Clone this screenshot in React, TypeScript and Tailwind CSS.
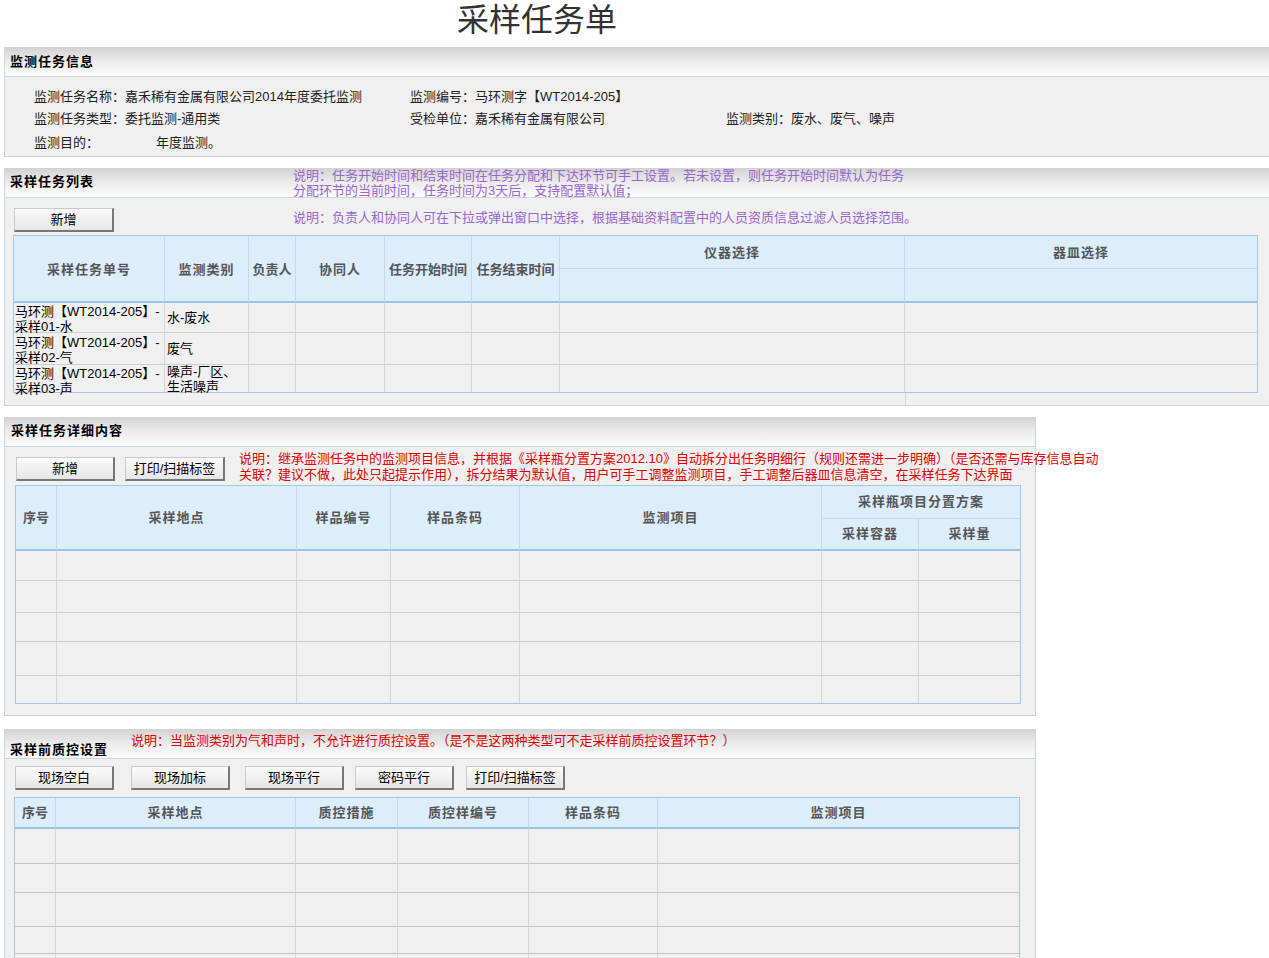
import React from "react";

const TH =
  "bg-[#dcedfc] border-r border-[#c4d9eb] p-0 text-center align-middle text-[13px] font-bold tracking-[1px] text-[#555]";
const TH_LAST =
  "bg-[#dcedfc] p-0 text-center align-middle text-[13px] font-bold tracking-[1px] text-[#555]";
const TH_BOTTOM = "border-b-2 border-b-[#9cc3e3]";
const TD = "border-r border-b border-r-[#d6d6d6] border-b-[#cdcdcd] p-0 align-top";

function Btn({ children, className = "" }: { children: React.ReactNode; className?: string }) {
  return (
    <button
      className={`flex h-[24px] w-[99px] shrink-0 items-center justify-center border-t border-l border-t-[#c9c9c9] border-l-[#c9c9c9] border-r-2 border-b-2 border-r-[#777] border-b-[#777] bg-linear-to-b from-[#fbfbfb] to-[#e6e6e6] text-[13px] leading-[16px] text-black ${className}`}
    >
      {children}
    </button>
  );
}

function PanelHead({
  title,
  titleClass = "",
  children,
}: {
  title: string;
  titleClass?: string;
  children?: React.ReactNode;
}) {
  return (
    <div className="flex h-[30px] items-start border-b border-[#cbd7e2] bg-linear-to-b from-[#d2d2d2] via-[#ececec] to-[#fcfcfc]">
      <div className={`shrink-0 text-[13px] font-bold leading-[16px] tracking-[1px] text-black ${titleClass}`}>
        {title}
      </div>
      {children}
    </div>
  );
}

// empty body rows: one entry per row height
function EmptyRows({ heights, cols, rowClass }: { heights: string[]; cols: number; rowClass?: string }) {
  return (
    <>
      {heights.map((h, r) => (
        <tr key={r} className={h}>
          {Array.from({ length: cols }).map((_, c) => {
            const lastCol = c === cols - 1;
            const lastRow = r === heights.length - 1;
            return (
              <td
                key={c}
                className={`p-0 ${lastCol ? "" : "border-r border-r-[#d6d6d6]"} ${
                  lastRow ? "" : `border-b ${rowClass ?? "border-b-[#cdcdcd]"}`
                }`}
              />
            );
          })}
        </tr>
      ))}
    </>
  );
}

// inner heights are fixed so two-line cells spill over like the original page
const taskRows: { no: React.ReactNode; type: React.ReactNode; h: string; pad: string; last?: boolean }[] = [
  {
    no: (
      <>
        马环测【WT2014-205】-
        <br />
        采样01-水
      </>
    ),
    type: "水-废水",
    h: "h-[29px]",
    pad: "pt-[1px]",
  },
  {
    no: (
      <>
        马环测【WT2014-205】-
        <br />
        采样02-气
      </>
    ),
    type: "废气",
    h: "h-[31px]",
    pad: "pt-[2px]",
  },
  {
    no: (
      <>
        马环测【WT2014-205】-
        <br />
        采样03-声
      </>
    ),
    type: (
      <>
        噪声-厂区、
        <br />
        生活噪声
      </>
    ),
    h: "h-[27px]",
    pad: "pt-[1px]",
    last: true,
  },
];

export default function App() {
  return (
    <div className="h-[958px] w-[1269px] overflow-hidden bg-white font-['Liberation_Sans','Noto_Sans_CJK_SC',sans-serif] text-[13px] leading-[16px] text-[#222]">
      <div className="h-[47px] w-[1074px] pt-[2px] text-center text-[32px] leading-[36px] text-[#333]">采样任务单</div>

      {/* 监测任务信息 */}
      <section className="ml-[4px] w-[1265px] border-l border-[#c5d8ea]">
        <PanelHead title="监测任务信息" titleClass="pl-[5px] pt-[7px]" />
        <div className="border-b border-[#d0d0d0] bg-[#f0f0f0] pt-[9px] pb-[3px] pl-[29px]">
          <div className="grid grid-cols-[376px_316px_1fr] grid-rows-[22px_22px_23px] items-center">
            <div>监测任务名称：嘉禾稀有金属有限公司2014年度委托监测</div>
            <div>监测编号：马环测字【WT2014-205】</div>
            <div />
            <div>监测任务类型：委托监测-通用类</div>
            <div>受检单位：嘉禾稀有金属有限公司</div>
            <div>监测类别：废水、废气、噪声</div>
            <div className="pt-[2px]">
              <span className="inline-block w-[122px]">监测目的：</span>年度监测。
            </div>
          </div>
        </div>
      </section>

      {/* 采样任务列表 */}
      <section className="mt-[11px] ml-[4px] w-[1265px] border-l border-[#c5d8ea]">
        <PanelHead title="采样任务列表" titleClass="w-[288px] pl-[5px] pt-[6px]">
          <p className="whitespace-nowrap leading-[15px] text-[#9966cc]">
            说明：任务开始时间和结束时间在任务分配和下达环节可手工设置。若未设置，则任务开始时间默认为任务
            <br />
            分配环节的当前时间，任务时间为3天后，支持配置默认值；
          </p>
        </PanelHead>
        <div className="border-b border-[#d0d0d0] bg-[#f0f0f0] pt-[10px] pl-[9px]">
          <div className="flex items-start">
            <Btn className="w-[100px]">新增</Btn>
            <p className="mt-[2px] ml-[179px] whitespace-nowrap leading-[15px] text-[#9966cc]">
              说明：负责人和协同人可在下拉或弹出窗口中选择，根据基础资料配置中的人员资质信息过滤人员选择范围。
            </p>
          </div>
          <div className="mt-[3px] -ml-[1px] w-[1245px] border border-[#a3c7e6]">
            <table className="w-full table-fixed border-separate border-spacing-0">
              <colgroup>
                <col className="w-[151px]" />
                <col className="w-[84px]" />
                <col className="w-[47px]" />
                <col className="w-[89px]" />
                <col className="w-[87px]" />
                <col className="w-[88px]" />
                <col className="w-[345px]" />
                <col />
              </colgroup>
              <thead>
                <tr className="h-[33px]">
                  <th rowSpan={2} className={`${TH} ${TH_BOTTOM} pt-[3px]`}>采样任务单号</th>
                  <th rowSpan={2} className={`${TH} ${TH_BOTTOM} pt-[3px]`}>监测类别</th>
                  <th rowSpan={2} className={`${TH} ${TH_BOTTOM} pt-[3px] tracking-normal`}>负责人</th>
                  <th rowSpan={2} className={`${TH} ${TH_BOTTOM} pt-[3px]`}>协同人</th>
                  <th rowSpan={2} className={`${TH} ${TH_BOTTOM} pt-[3px] tracking-normal whitespace-nowrap`}>任务开始时间</th>
                  <th rowSpan={2} className={`${TH} ${TH_BOTTOM} pt-[3px] tracking-normal whitespace-nowrap`}>任务结束时间</th>
                  <th className={`${TH} border-b border-b-[#c4d9eb] pt-[2px]`}>仪器选择</th>
                  <th className={`${TH_LAST} border-b border-b-[#c4d9eb] pt-[2px]`}>器皿选择</th>
                </tr>
                <tr className="h-[34px]">
                  <th className={`${TH} ${TH_BOTTOM}`} />
                  <th className={`${TH_LAST} ${TH_BOTTOM}`} />
                </tr>
              </thead>
              <tbody>
                {taskRows.map((row, i) => {
                  const b = row.last ? "border-b-0" : "";
                  return (
                    <tr key={i}>
                      <td className={`${TD} ${b}`}>
                        <div className={`${row.h} ${row.pad} pl-[1px] leading-[15px] whitespace-nowrap text-black`}>
                          {row.no}
                        </div>
                      </td>
                      <td className={`${TD} ${b}`}>
                        <div className={`${row.h} flex items-center pl-[2px] leading-[15px] whitespace-nowrap text-black`}>
                          <div>{row.type}</div>
                        </div>
                      </td>
                      <td className={`${TD} ${b}`} />
                      <td className={`${TD} ${b}`} />
                      <td className={`${TD} ${b}`} />
                      <td className={`${TD} ${b}`} />
                      <td className={`${TD} ${b}`} />
                      <td className={`${TD} border-r-0 ${b}`} />
                    </tr>
                  );
                })}
              </tbody>
            </table>
          </div>
          <div className="ml-[891px] h-[12px] border-l border-[#d6d6d6]" />
        </div>
      </section>

      {/* 采样任务详细内容 */}
      <section className="mt-[11px] ml-[4px] w-[1032px] border-x border-l-[#c5d8ea] border-r-[#c9d4de]">
        <PanelHead title="采样任务详细内容" titleClass="pl-[6px] pt-[6px]" />
        <div className="border-b border-[#d0d0d0] bg-[#f0f0f0] pt-[4px] pb-[11px] pl-[11px]">
          <div className="flex items-start">
            <Btn className="mt-[6px]">新增</Btn>
            <Btn className="mt-[6px] ml-[10px] w-[100px]">打印/扫描标签</Btn>
            <p className="ml-[14px] whitespace-nowrap leading-[16px] text-[#e00000]">
              说明：继承监测任务中的监测项目信息，并根据《采样瓶分置方案2012.10》自动拆分出任务明细行（规则还需进一步明确）（是否还需与库存信息自动
              <br />
              关联？建议不做，此处只起提示作用），拆分结果为默认值，用户可手工调整监测项目，手工调整后器皿信息清空，在采样任务下达界面
            </p>
          </div>
          <div className="mt-[2px] ml-[-1px] w-[1006px] border border-[#a3c7e6]">
            <table className="w-full table-fixed border-separate border-spacing-0">
              <colgroup>
                <col className="w-[41px]" />
                <col className="w-[240px]" />
                <col className="w-[94px]" />
                <col className="w-[129px]" />
                <col className="w-[302px]" />
                <col className="w-[97px]" />
                <col />
              </colgroup>
              <thead>
                <tr className="h-[33px]">
                  <th rowSpan={2} className={`${TH} ${TH_BOTTOM} tracking-normal`}>序号</th>
                  <th rowSpan={2} className={`${TH} ${TH_BOTTOM}`}>采样地点</th>
                  <th rowSpan={2} className={`${TH} ${TH_BOTTOM}`}>样品编号</th>
                  <th rowSpan={2} className={`${TH} ${TH_BOTTOM}`}>样品条码</th>
                  <th rowSpan={2} className={`${TH} ${TH_BOTTOM}`}>监测项目</th>
                  <th colSpan={2} className={`${TH_LAST} border-b border-b-[#c4d9eb]`}>采样瓶项目分置方案</th>
                </tr>
                <tr className="h-[32px]">
                  <th className={`${TH} ${TH_BOTTOM}`}>采样容器</th>
                  <th className={`${TH_LAST} ${TH_BOTTOM}`}>采样量</th>
                </tr>
              </thead>
              <tbody>
                <EmptyRows heights={["h-[30px]", "h-[32px]", "h-[29px]", "h-[34px]", "h-[27px]"]} cols={7} />
              </tbody>
            </table>
          </div>
        </div>
      </section>

      {/* 采样前质控设置 */}
      <section className="mt-[13px] ml-[4px] w-[1032px] border-x border-l-[#c5d8ea] border-r-[#c9d4de]">
        <PanelHead title="采样前质控设置" titleClass="w-[126px] pl-[5px] pt-[13px]">
          <p className="pt-[4px] whitespace-nowrap leading-[16px] text-[#e00000]">
            说明：当监测类别为气和声时，不允许进行质控设置。（是不是这两种类型可不走采样前质控设置环节？）
          </p>
        </PanelHead>
        <div className="bg-[#f0f0f0] pt-[7px] pl-[10px]">
          <div className="flex items-start">
            <Btn>现场空白</Btn>
            <Btn className="ml-[17px]">现场加标</Btn>
            <Btn className="ml-[15px]">现场平行</Btn>
            <Btn className="ml-[11px]">密码平行</Btn>
            <Btn className="ml-[12px]">打印/扫描标签</Btn>
          </div>
          <div className="mt-[7px] ml-[-1px] w-[1006px] border border-[#a3c7e6]">
            <table className="w-full table-fixed border-separate border-spacing-0">
              <colgroup>
                <col className="w-[41px]" />
                <col className="w-[240px]" />
                <col className="w-[102px]" />
                <col className="w-[131px]" />
                <col className="w-[129px]" />
                <col />
              </colgroup>
              <thead>
                <tr className="h-[31px]">
                  <th className={`${TH} ${TH_BOTTOM} tracking-normal`}>序号</th>
                  <th className={`${TH} ${TH_BOTTOM}`}>采样地点</th>
                  <th className={`${TH} ${TH_BOTTOM}`}>质控措施</th>
                  <th className={`${TH} ${TH_BOTTOM}`}>质控样编号</th>
                  <th className={`${TH} ${TH_BOTTOM}`}>样品条码</th>
                  <th className={`${TH_LAST} ${TH_BOTTOM}`}>监测项目</th>
                </tr>
              </thead>
              <tbody>
                <EmptyRows
                  heights={["h-[35px]", "h-[29px]", "h-[34px]", "h-[27px]", "h-[35px]", "h-[35px]"]}
                  cols={6}
                  rowClass="border-b-[#c4c4c4]"
                />
              </tbody>
            </table>
          </div>
        </div>
      </section>
    </div>
  );
}
